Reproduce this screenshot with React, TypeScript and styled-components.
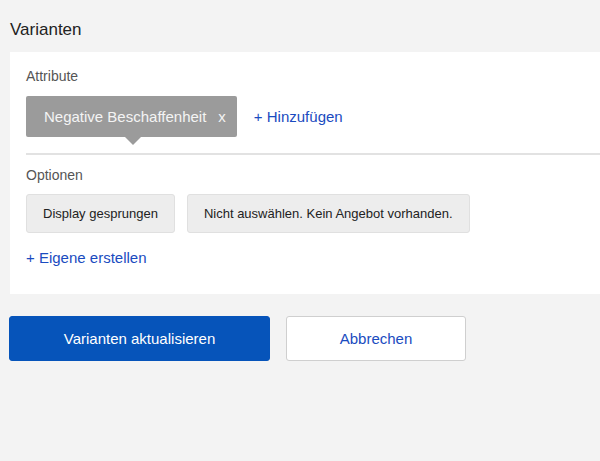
import React from 'react'
import styled, { createGlobalStyle } from 'styled-components'

const GlobalStyle = createGlobalStyle`
  html, body {
    margin: 0;
    padding: 0;
    background: #f3f3f3;
    font-family: 'Liberation Sans', Arial, sans-serif;
    overflow: hidden;
  }
`

const PAGE = styled.div`
  width: 600px;
  height: 461px;
  padding: 20px 0 0 10px;
  box-sizing: border-box;
  background: #f3f3f3;
`

const HEADING = styled.h2`
  margin: 0 0 12px 0;
  font-size: 17px;
  font-weight: 400;
  line-height: 20px;
  color: #222;
`

const CARD = styled.div`
  background: #fff;
  padding: 16px 0 22px 16px;
  box-sizing: border-box;
  height: 242px;
`

const LABEL = styled.div`
  font-size: 14px;
  line-height: 16px;
  color: #555;
`

const ATTR_ROW = styled.div`
  display: flex;
  align-items: center;
  gap: 17px;
  margin-top: 12px;
`

const CHIP = styled.div`
  position: relative;
  display: flex;
  align-items: center;
  gap: 12px;
  height: 41px;
  padding: 0 11px 0 18px;
  box-sizing: border-box;
  background: #9b9b9b;
  border-radius: 2px;
  color: #f4f4f4;
  font-size: 15px;
  &::after {
    content: '';
    position: absolute;
    left: 99px;
    bottom: -8px;
    border-left: 8px solid transparent;
    border-right: 8px solid transparent;
    border-top: 8px solid #9b9b9b;
  }
`

const LINK = styled.a<{ $size?: number }>`
  color: #1a4bc0;
  font-size: ${({ $size }) => $size ?? 15}px;
  text-decoration: none;
  cursor: pointer;
`

const DIVIDER = styled.div`
  height: 2px;
  background: #e2e2e2;
  margin: 16px 0 12px 0;
`

const OPTIONS = styled.div`
  display: flex;
  gap: 12px;
  margin-top: 11px;
`

const OPTION = styled.button`
  height: 39px;
  padding: 0 16px;
  background: #ededed;
  border: 1px solid #e0e0e0;
  border-radius: 3px;
  font-family: 'Liberation Sans', Arial, sans-serif;
  font-size: 13px;
  color: #222;
`

const CREATE = styled.div`
  margin-top: 16px;
`

const ACTIONS = styled.div`
  display: flex;
  gap: 16px;
  margin: 22px 0 0 -1px;
`

const BUTTON = styled.button<{ $primary?: boolean; $width: number }>`
  width: ${({ $width }) => $width}px;
  height: 45px;
  border-radius: 3px;
  font-family: 'Liberation Sans', Arial, sans-serif;
  font-size: 15px;
  background: ${({ $primary }) => ($primary ? '#0654ba' : '#fff')};
  color: ${({ $primary }) => ($primary ? '#fff' : '#1a4bc0')};
  border: 1px solid ${({ $primary }) => ($primary ? '#0654ba' : '#cfcfcf')};
`

export default function App() {
  return (
    <PAGE>
      <GlobalStyle />
      <HEADING>Varianten</HEADING>
      <CARD>
        <LABEL>Attribute</LABEL>
        <ATTR_ROW>
          <CHIP>
            <span>Negative Beschaffenheit</span>
            <span>x</span>
          </CHIP>
          <LINK>+ Hinzufügen</LINK>
        </ATTR_ROW>
        <DIVIDER />
        <LABEL>Optionen</LABEL>
        <OPTIONS>
          <OPTION>Display gesprungen</OPTION>
          <OPTION>Nicht auswählen. Kein Angebot vorhanden.</OPTION>
        </OPTIONS>
        <CREATE>
          <LINK>+ Eigene erstellen</LINK>
        </CREATE>
      </CARD>
      <ACTIONS>
        <BUTTON $primary $width={261}>Varianten aktualisieren</BUTTON>
        <BUTTON $width={180}>Abbrechen</BUTTON>
      </ACTIONS>
    </PAGE>
  )
}
